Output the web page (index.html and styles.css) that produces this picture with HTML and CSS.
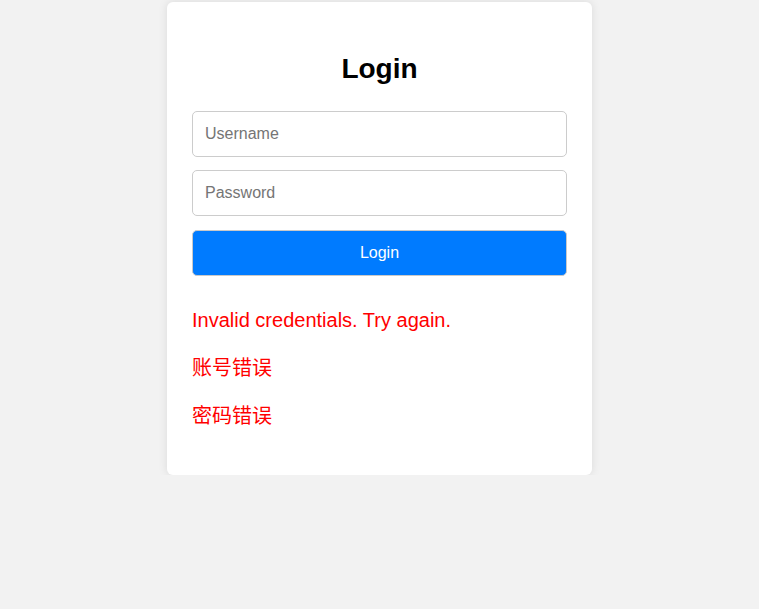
FILE: index.html
```html
<!DOCTYPE html>
<html lang="en">
<head>
<meta charset="utf-8">
<title>Login</title>
<link rel="stylesheet" href="styles.css">
</head>
<body>
<div class="card">
  <h2 class="title">Login</h2>
  <form class="form">
    <input class="field" type="text" placeholder="Username">
    <input class="field" type="password" placeholder="Password">
    <button class="btn" type="button">Login</button>
  </form>
  <div class="errors">
    <p class="error">Invalid credentials. Try again.</p>
    <p class="error">账号错误</p>
    <p class="error">密码错误</p>
  </div>
</div>
</body>
</html>
```
FILE: styles.css
```css
html, body {
  margin: 0;
  padding: 0;
}
body {
  background: #f2f2f2;
  font-family: "Liberation Sans", Arial, "Noto Sans CJK SC", sans-serif;
}
.card {
  width: 375px;
  margin: 2px auto 0;
  padding: 25px 25px 45px;
  background: #fff;
  border-radius: 6px;
  box-shadow: 0 0 10px rgba(0, 0, 0, 0.1);
}
.title {
  margin: 26px 0 26px;
  font-size: 28px;
  line-height: 32px;
  font-weight: bold;
  text-align: center;
  color: #000;
}
.form {
  display: flex;
  flex-direction: column;
  gap: 13px;
}
.field {
  box-sizing: border-box;
  width: 100%;
  height: 46px;
  padding: 0 12px;
  border: 1px solid #ccc;
  border-radius: 5px;
  font-family: inherit;
  font-size: 16px;
  color: #333;
  background: #fff;
  outline: none;
}
.field::placeholder {
  color: #757575;
}
.btn {
  box-sizing: border-box;
  width: 100%;
  height: 46px;
  margin-top: 1px;
  border: 1px solid #c9c9c9;
  border-radius: 5px;
  background: #007bff;
  color: #fff;
  font-family: inherit;
  font-size: 16px;
  cursor: pointer;
}
.errors {
  display: flex;
  flex-direction: column;
  gap: 20px;
  margin-top: 30px;
}
.error {
  margin: 0;
  font-size: 20px;
  line-height: 28px;
  color: #f00;
}
```
